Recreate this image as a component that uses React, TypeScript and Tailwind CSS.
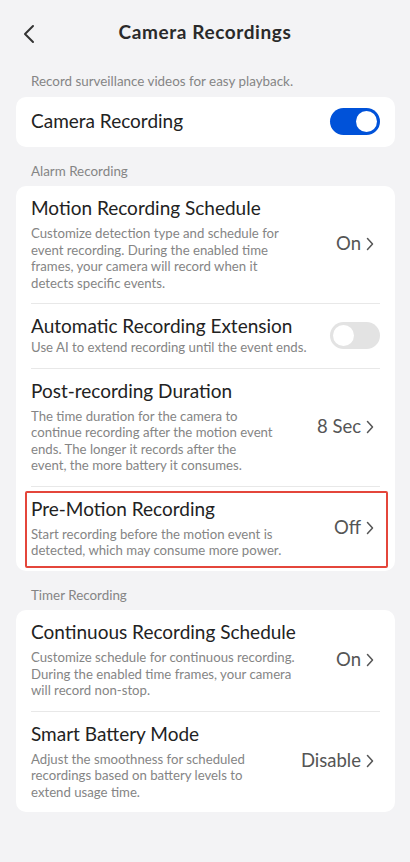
import React from 'react';

type Row = {
  title: string;
  lines: string[];
  value?: string;
  toggle?: boolean;
  highlight?: boolean;
  descGap?: string;
};

const alarmRows: Row[] = [
  {
    title: 'Motion Recording Schedule',
    lines: [
      'Customize detection type and schedule for',
      'event recording. During the enabled time',
      'frames, your camera will record when it',
      'detects specific events.',
    ],
    value: 'On',
  },
  {
    title: 'Automatic Recording Extension',
    lines: ['Use AI to extend recording until the event ends.'],
    toggle: false,
    descGap: 'mt-[2px]',
  },
  {
    title: 'Post-recording Duration',
    lines: [
      'The time duration for the camera to',
      'continue recording after the motion event',
      'ends. The longer it records after the',
      'event, the more battery it consumes.',
    ],
    value: '8 Sec',
  },
  {
    title: 'Pre-Motion Recording',
    lines: ['Start recording before the motion event is', 'detected, which may consume more power.'],
    value: 'Off',
    highlight: true,
  },
];

const timerRows: Row[] = [
  {
    title: 'Continuous Recording Schedule',
    lines: [
      'Customize schedule for continuous recording.',
      'During the enabled time frames, your camera',
      'will record non-stop.',
    ],
    value: 'On',
  },
  {
    title: 'Smart Battery Mode',
    lines: [
      'Adjust the smoothness for scheduled',
      'recordings based on battery levels to',
      'extend usage time.',
    ],
    value: 'Disable',
  },
];

function Chevron() {
  return (
    <svg width="10" height="16" viewBox="0 0 10 16" fill="none" className="ml-[4px] mr-[5px] shrink-0">
      <path d="M2.5 2.5 L7.5 8 L2.5 13.5" stroke="#555" strokeWidth="1.5" strokeLinecap="round" strokeLinejoin="round" />
    </svg>
  );
}

function Toggle({ on }: { on: boolean }) {
  return (
    <div
      className={`w-[50px] h-[27px] rounded-full p-[3px] flex shrink-0 ${
        on ? 'bg-[#0052d9] justify-end' : 'bg-[#e3e3e3] justify-start'
      }`}
    >
      <div className="w-[21px] h-[21px] rounded-full bg-white" />
    </div>
  );
}

function SettingRow({ row, first }: { row: Row; first: boolean }) {
  return (
    <div className={`relative flex items-center pt-[11px] pb-[12px] ${first ? '' : 'border-t border-[#e8e8e8]'}`}>
      <div className="flex-1 min-w-0">
        <div className="text-[19px] leading-[22px] text-[#222]">{row.title}</div>
        <div className={`${row.descGap ?? 'mt-[6px]'} text-[13.2px] leading-[16.5px] text-[#858585]`}>
          {row.lines.map((l) => (
            <div key={l} className="whitespace-nowrap">
              {l}
            </div>
          ))}
        </div>
      </div>
      {row.toggle !== undefined ? (
        <Toggle on={row.toggle} />
      ) : (
        <div className="flex items-center shrink-0">
          <span className="text-[18.5px] text-[#555]">{row.value}</span>
          <Chevron />
        </div>
      )}
      {row.highlight && (
        <div className="absolute top-[4px] bottom-[3px] left-[-6px] right-[-8px] border-2 border-[#e4463b] rounded-[2px] pointer-events-none" />
      )}
    </div>
  );
}

function SectionLabel({ children, top = 'pt-[16px]' }: { children: React.ReactNode; top?: string }) {
  return <div className={`${top} pb-[7px] px-[31px] text-[13.4px] leading-[16.5px] text-[#858585]`}>{children}</div>;
}

export default function App() {
  return (
    <div className="min-h-[862px] w-full bg-[#f3f3f5]" style={{ fontFamily: 'Lato, "Noto Sans", sans-serif' }}>
      {/* Header */}
      <div className="relative h-[65px] flex items-center justify-center">
        <button className="absolute left-[20px] top-[22px] p-[2px]">
          <svg width="14" height="20" viewBox="0 0 14 20" fill="none">
            <path d="M11 2 L3 10 L11 18" stroke="#333" strokeWidth="2" strokeLinecap="round" strokeLinejoin="round" />
          </svg>
        </button>
        <h1 className="text-[19px] font-bold tracking-[0.6px] text-[#2a2a2a]">Camera Recordings</h1>
      </div>

      <SectionLabel top="pt-[8px]">Record surveillance videos for easy playback.</SectionLabel>
      <div className="ml-4 mr-[15px] bg-white rounded-[10px] h-[50px] px-[15px] flex items-center justify-between">
        <span className="text-[19px] text-[#222] -mt-[1px]">Camera Recording</span>
        <Toggle on />
      </div>

      <SectionLabel>Alarm Recording</SectionLabel>
      <div className="ml-4 mr-[15px] bg-white rounded-[10px] px-[15px]">
        {alarmRows.map((r, i) => (
          <SettingRow key={r.title} row={r} first={i === 0} />
        ))}
      </div>

      <SectionLabel>Timer Recording</SectionLabel>
      <div className="ml-4 mr-[15px] bg-white rounded-[10px] px-[15px]">
        {timerRows.map((r, i) => (
          <SettingRow key={r.title} row={r} first={i === 0} />
        ))}
      </div>
    </div>
  );
}
